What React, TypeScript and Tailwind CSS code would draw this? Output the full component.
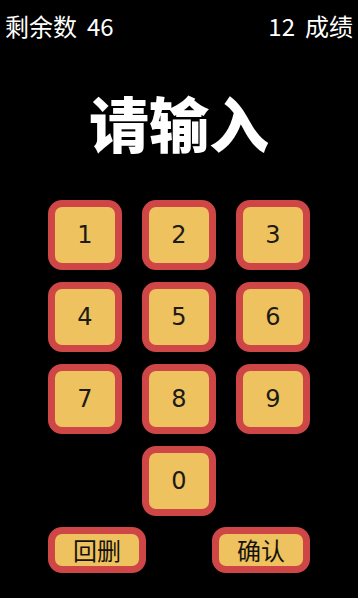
import React from "react";

const cjk = { fontFamily: '"Noto Sans CJK SC", "Noto Sans", sans-serif' };
const dv = { fontFamily: '"DejaVu Sans", sans-serif' };

function Key({ label }: { label: string }) {
  return (
    <div className="w-[74px] h-[70px] rounded-[14px] border-[7px] border-[#cf4646] bg-[#eec25e] flex items-center justify-center">
      <span className="text-[24px] leading-none text-[#1e1a14]" style={dv}>
        {label}
      </span>
    </div>
  );
}

function WideKey({ label }: { label: string }) {
  return (
    <div className="w-[98px] h-[46px] rounded-[14px] border-[7px] border-[#cf4646] bg-[#eec25e] flex items-center justify-center">
      <span className="text-[24px] leading-none text-[#15120d]" style={cjk}>
        {label}
      </span>
    </div>
  );
}

export default function App() {
  return (
    <div className="w-[358px] h-[598px] bg-black text-white overflow-hidden flex flex-col">
      <div className="flex justify-between items-center px-[5px] h-[52px]" style={cjk}>
        <span className="text-[24px] leading-none flex gap-[10px]">
          <span>剩余数</span>
          <span>46</span>
        </span>
        <span className="text-[24px] leading-none flex gap-[10px]">
          <span>12</span>
          <span>成绩</span>
        </span>
      </div>
      <div className="flex justify-center items-center h-[140px]">
        <span className="text-[60px] font-black leading-none" style={cjk}>
          请输入
        </span>
      </div>
      <div className="w-[262px] mx-auto mt-[8px] flex flex-col">
        <div className="grid grid-cols-[74px_74px_74px] gap-x-[20px] gap-y-[12px]">
          {["1", "2", "3", "4", "5", "6", "7", "8", "9"].map((d) => (
            <Key key={d} label={d} />
          ))}
          <div />
          <Key label="0" />
          <div />
        </div>
        <div className="flex justify-between mt-[11px]">
          <WideKey label="回删" />
          <WideKey label="确认" />
        </div>
      </div>
    </div>
  );
}
